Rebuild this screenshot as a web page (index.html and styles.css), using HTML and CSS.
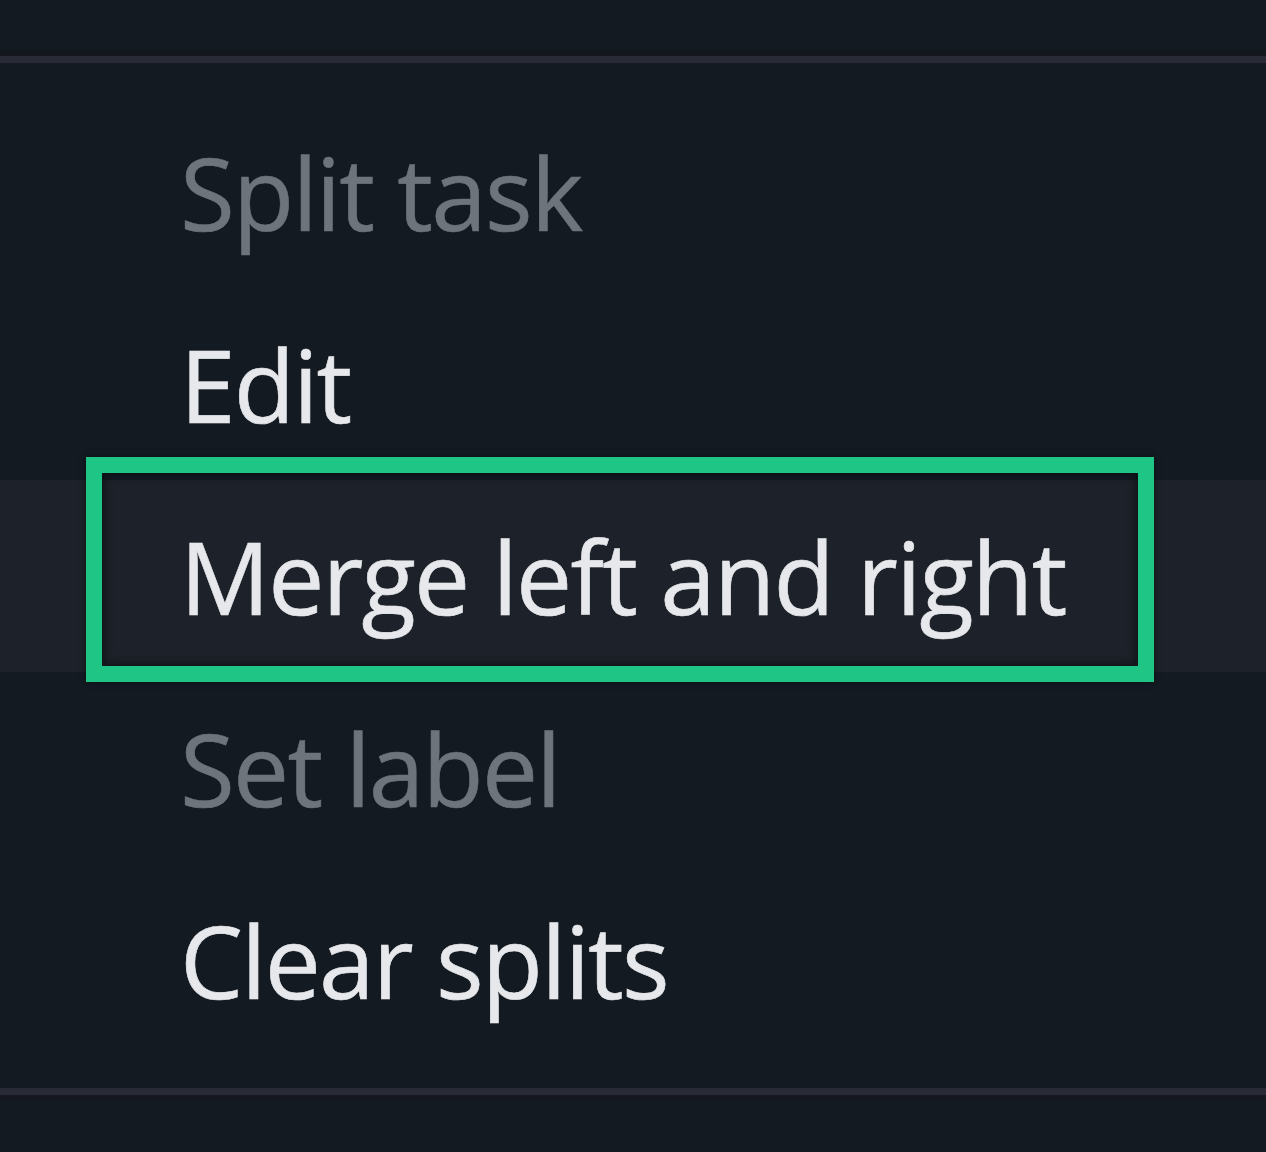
FILE: index.html
```html
<!DOCTYPE html>
<html lang="en">
<head>
<meta charset="utf-8">
<title>Context menu</title>
<link rel="stylesheet" href="styles.css">
</head>
<body>
<div class="page">
  <div class="top"></div>
  <ul class="menu">
    <li class="item disabled">Split task</li>
    <li class="item">Edit</li>
    <li class="item active"><span class="focus-ring"></span>Merge left and right</li>
    <li class="item disabled">Set label</li>
    <li class="item">Clear splits</li>
  </ul>
  <div class="bottom"></div>
</div>
</body>
</html>
```
FILE: styles.css
```css
html, body {
  margin: 0;
  padding: 0;
  background: #131a22;
}
.page {
  width: 1266px;
  height: 1152px;
  background: #131a22;
  font-family: "Open Sans", "Noto Sans", sans-serif;
  overflow: hidden;
}
.top {
  height: 56px;
  border-bottom: 7px solid #282b36;
  box-sizing: content-box;
  box-shadow: 0 -6px 0 0 #15171f inset;
}
.menu {
  list-style: none;
  margin: 0;
  padding: 33px 0 32px;
}
.item {
  position: relative;
  height: 192px;
  display: flex;
  align-items: center;
  padding-left: 180px;
  font-size: 100px;
  color: #e6e8eb;
  letter-spacing: -1.8px;
  -webkit-text-stroke: 0.6px currentColor;
}
.item.disabled {
  color: #6e747c;
}
.item.active {
  background: #1d222a;
}
.focus-ring {
  position: absolute;
  left: 86px;
  top: -23px;
  width: 1068px;
  height: 225px;
  box-sizing: border-box;
  border: 16px solid #1fc584;
  box-shadow: inset 0 0 10px 2px rgba(0, 0, 0, 0.45), 0 0 6px rgba(0, 0, 0, 0.5);
}
.bottom {
  border-top: 7px solid #282b36;
  box-shadow: 0 5px 0 #16171f;
}
```
